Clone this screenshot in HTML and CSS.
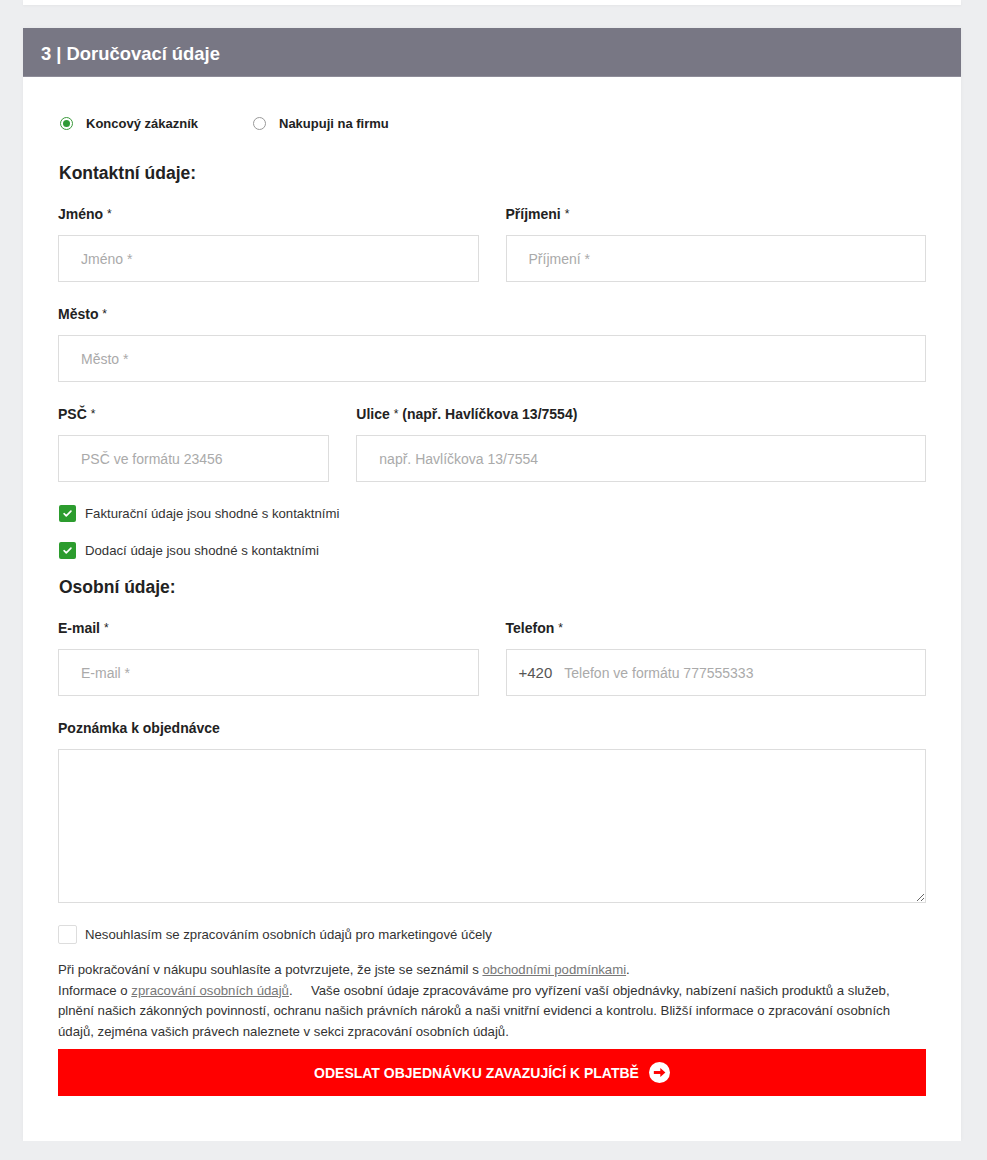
FILE: index.html
```html
<!DOCTYPE html>
<html>
<head>
<meta charset="utf-8">
<link rel="stylesheet" href="styles.css">
</head>
<body>
    <div class="prev-card"></div>

    <div class="card">
        <div class="card-head">3 | Doručovací údaje</div>

        <div class="card-body">
            <div class="radios">
                <label class="radio-item"><span class="radio checked"></span>Koncový zákazník</label>
                <label class="radio-item"><span class="radio"></span>Nakupuji na firmu</label>
            </div>

            <h2 class="section-title">Kontaktní údaje:</h2>

            <div class="row two">
                <div class="field">
                    <div class="label">Jméno <span class="req">*</span></div>
                    <input class="input" type="text" placeholder="Jméno *">
                </div>
                <div class="field">
                    <div class="label">Příjmeni <span class="req">*</span></div>
                    <input class="input" type="text" placeholder="Příjmení *">
                </div>
            </div>

            <div class="field">
                <div class="label">Město <span class="req">*</span></div>
                <input class="input" type="text" placeholder="Město *">
            </div>

            <div class="row three">
                <div class="field">
                    <div class="label">PSČ <span class="req">*</span></div>
                    <input class="input" type="text" placeholder="PSČ ve formátu 23456">
                </div>
                <div class="field span2">
                    <div class="label">Ulice <span class="req">*</span> (např. Havlíčkova 13/7554)</div>
                    <input class="input" type="text" placeholder="např. Havlíčkova 13/7554">
                </div>
            </div>

            <label class="check-item first"><span class="check on"><svg viewBox="0 0 16 16" width="11" height="11"><path d="M3 8.3l3.2 3.1L13 4.6" fill="none" stroke="#fff" stroke-width="2.4" stroke-linecap="round" stroke-linejoin="round"/></svg></span>Fakturační údaje jsou shodné s kontaktními</label>
            <label class="check-item"><span class="check on"><svg viewBox="0 0 16 16" width="11" height="11"><path d="M3 8.3l3.2 3.1L13 4.6" fill="none" stroke="#fff" stroke-width="2.4" stroke-linecap="round" stroke-linejoin="round"/></svg></span>Dodací údaje jsou shodné s kontaktními</label>

            <h2 class="section-title second">Osobní údaje:</h2>

            <div class="row two">
                <div class="field">
                    <div class="label">E-mail <span class="req">*</span></div>
                    <input class="input" type="text" placeholder="E-mail *">
                </div>
                <div class="field">
                    <div class="label">Telefon <span class="req">*</span></div>
                    <div class="phone">
                        <span class="prefix">+420</span>
                        <input class="phone-input" type="text" placeholder="Telefon ve formátu 777555333">
                    </div>
                </div>
            </div>

            <div class="field">
                <div class="label">Poznámka k objednávce</div>
                <textarea class="note"></textarea>
            </div>

            <label class="check-item marketing"><span class="check off"></span>Nesouhlasím se zpracováním osobních údajů pro marketingové účely</label>

            <p class="terms">
                Při pokračování v nákupu souhlasíte a potvrzujete, že jste se seznámil s <a href="#">obchodními podmínkami</a>.<br>
                Informace o <a href="#">zpracování osobních údajů</a>.&nbsp;&nbsp;&nbsp;&nbsp; Vaše osobní údaje zpracováváme pro vyřízení vaší objednávky, nabízení našich produktů a služeb, plnění našich zákonných povinností, ochranu našich právních nároků a naši vnitřní evidenci a kontrolu. Bližší informace o zpracování osobních údajů, zejména vašich právech naleznete v sekci zpracování osobních údajů.
            </p>

            <button class="submit">ODESLAT OBJEDNÁVKU ZAVAZUJÍCÍ K PLATBĚ
                <svg class="arrow" viewBox="0 0 20 20" width="21" height="21"><circle cx="10" cy="10" r="10" fill="#fff"/><path d="M4.6 10h8" stroke="#f00" stroke-width="2.8"/><path d="M10.8 5.8L15.6 10 10.8 14.2z" fill="#f00"/></svg>
            </button>
        </div>
    </div>
</body>
</html>
```

FILE: styles.css
```css
body {
    margin: 0;
    background: #edeef0;
    font-family: "Liberation Sans", Arial, sans-serif;
    color: #222;
}
.prev-card {
    margin: 0 26px 0 23px;
    height: 5px;
    background: #fff;
    box-shadow: 0 1px 3px rgba(0,0,0,0.04);
}
.card {
    margin: 23px 26px 0 23px;
    background: #fff;
    box-shadow: 0 0 4px rgba(0,0,0,0.04);
}
.card-head {
    background: #787784;
    color: #fff;
    font-size: 18.4px;
    font-weight: bold;
    height: 49px;
    line-height: 51px;
    padding-left: 18px;
    border-bottom: 1px solid #8e8d99;
    box-sizing: border-box;
}
.card-body {
    padding: 38px 35px 45px 35px;
}
.radios {
    display: flex;
    height: 16px;
    align-items: center;
    font-size: 13px;
    font-weight: bold;
}
.radio-item {
    display: flex;
    align-items: center;
    margin-right: 53px;
}
.radio {
    width: 11px;
    height: 11px;
    border: 1px solid #999;
    border-radius: 50%;
    margin: 0 13px 0 2px;
    position: relative;
}
.radio.checked {
    border-color: #3a9a3a;
}
.radio.checked::after {
    content: "";
    position: absolute;
    left: 2px;
    top: 2px;
    width: 7px;
    height: 7px;
    border-radius: 50%;
    background: #2e9a35;
}
.section-title {
    font-size: 17.5px;
    font-weight: bold;
    line-height: 20px;
    margin: 32px 0 24px 1px;
    color: #222;
}
.section-title.second {
    margin-top: 18px;
}
.row {
    display: grid;
    column-gap: 27px;
}
.row.two {
    grid-template-columns: 1fr 1fr;
}
.row.three {
    grid-template-columns: 1fr 1fr 1fr;
}
.span2 {
    grid-column: span 2;
}
.field {
    margin-bottom: 25px;
}
.label {
    font-size: 14px;
    font-weight: bold;
    line-height: 15px;
    margin-bottom: 13px;
    color: #222;
}
.req {
    font-weight: normal;
    font-size: 12px;
    vertical-align: top;
}
.input, .phone {
    display: block;
    width: 100%;
    height: 47px;
    box-sizing: border-box;
    border: 1px solid #ddd;
    padding: 0 22px;
    font-family: "Liberation Sans", Arial, sans-serif;
    font-size: 14px;
    color: #333;
    outline: none;
}
.input::placeholder, .phone-input::placeholder {
    color: #aaa;
}
.phone {
    display: flex;
    align-items: center;
    padding: 0 12px;
}
.prefix {
    font-size: 15px;
    color: #555;
    margin-right: 12px;
}
.phone-input {
    border: none;
    outline: none;
    flex: 1;
    font-family: "Liberation Sans", Arial, sans-serif;
    font-size: 14px;
    padding: 0;
}
.note {
    display: block;
    width: 100%;
    height: 154px;
    box-sizing: border-box;
    border: 1px solid #ddd;
    margin-top: 0;
    outline: none;
}
.check-item {
    display: flex;
    align-items: center;
    font-size: 13.2px;
    color: #333;
    height: 17px;
    margin-top: 20px;
}
.check-item.first {
    margin-top: -2px;
}
.check {
    width: 17px;
    height: 17px;
    border-radius: 2px;
    margin: 0 9px 0 1px;
    box-sizing: border-box;
    display: flex;
    align-items: center;
    justify-content: center;
}
.check.on {
    background: #2c9c2e;
}
.check.off {
    width: 19px;
    height: 19px;
    border: 1px solid #ddd;
    margin: 0 8px 0 0;
}
.check-item.marketing {
    height: 19px;
    margin-top: -3px;
}
.terms {
    font-size: 13.2px;
    line-height: 20.5px;
    color: #333;
    margin: 16px 0 7px 0;
}
.terms a {
    color: #777;
}
.submit {
    display: flex;
    align-items: center;
    justify-content: center;
    width: 100%;
    height: 47px;
    background: #ff0000;
    border: none;
    color: #fff;
    font-family: "Liberation Sans", Arial, sans-serif;
    font-size: 14px;
    font-weight: bold;
    padding: 0;
}
.arrow {
    margin-left: 10px;
}
```
